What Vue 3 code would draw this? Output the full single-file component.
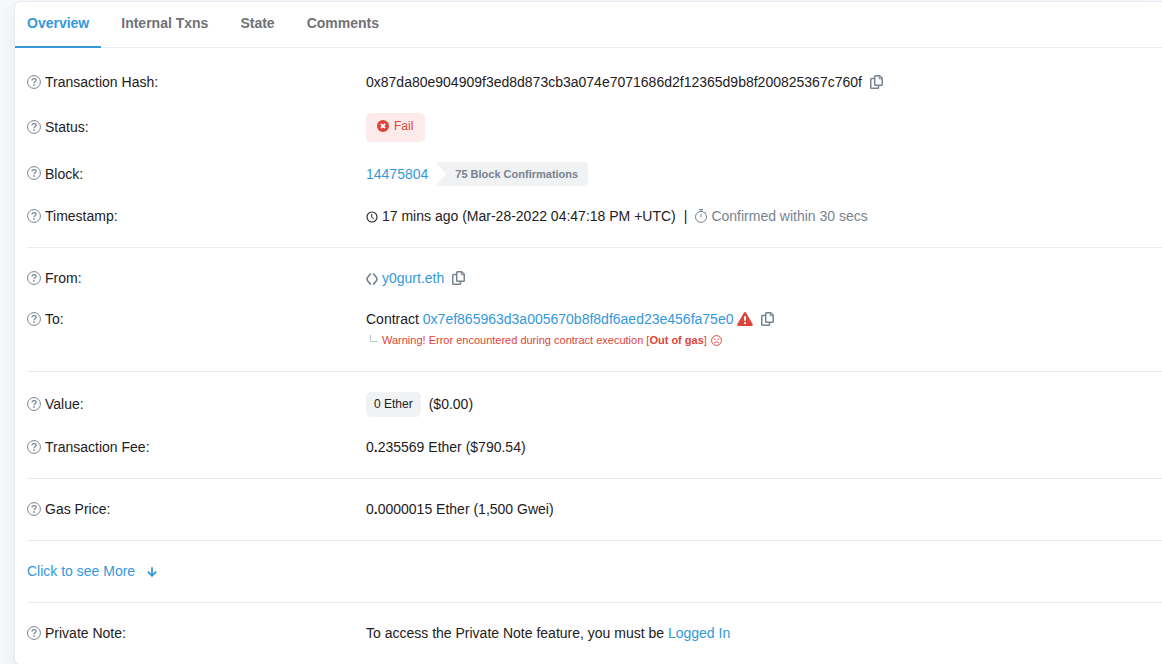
<script setup>
import { ref, h } from 'vue'

const tabs = ['Overview', 'Internal Txns', 'State', 'Comments']
const active = ref('Overview')

const HelpIcon = () =>
  h('svg', { width: 14, height: 14, viewBox: '0 0 14 14', fill: 'none', stroke: '#77838f', 'aria-hidden': 'true' }, [
    h('circle', { cx: 7, cy: 7, r: 6.4 }),
    h('path', { d: 'M5 5.5C5 4.2 5.9 3.6 7 3.6s2.1 .7 2.1 1.7c0 1.5-2.1 1.5-2.1 2.9', 'stroke-width': 1.2 }),
    h('path', { d: 'M7 9.3v1.5', 'stroke-width': 1.5 })
  ])

const CopyIcon = () =>
  h('svg', { width: 13, height: 14, viewBox: '0 0 13 14', fill: 'none', stroke: '#77838f', 'stroke-width': 1.5, 'stroke-linejoin': 'round', 'aria-hidden': 'true' }, [
    h('path', { d: 'M5.5 .75h4.2l2.55 2.55v6.2a.8 .8 0 0 1-.8 .8H5.5a.8 .8 0 0 1-.8-.8V1.55a.8 .8 0 0 1 .8-.8z' }),
    h('path', { d: 'M9.2 1v2.8H12', 'stroke-width': 1 }),
    h('path', { d: 'M4.7 3.5H1.55a.8 .8 0 0 0-.8 .8v8.15a.8 .8 0 0 0 .8 .8H7.7a.8 .8 0 0 0 .8-.8V10.5' })
  ])
</script>

<template>
  <main class="page">
    <div class="card">
      <nav class="tabs">
        <button
          v-for="t in tabs"
          :key="t"
          type="button"
          class="tab"
          :class="{ active: t === active }"
          @click="active = t"
        >{{ t }}</button>
      </nav>

      <div class="body">
        <section class="group">
          <div class="row">
            <div class="label"><HelpIcon />Transaction Hash:</div>
            <div class="value">
              <span>0x87da80e904909f3ed8d873cb3a074e7071686d2f12365d9b8f200825367c760f</span>
              <button type="button" class="copy" aria-label="Copy transaction hash"><CopyIcon /></button>
            </div>
          </div>
          <div class="row">
            <div class="label"><HelpIcon />Status:</div>
            <div class="value">
              <span class="fail">
                <svg width="12" height="12" viewBox="0 0 12 12" aria-hidden="true">
                  <circle cx="6" cy="6" r="6" fill="#de4437" />
                  <path d="M3.9 3.9l4.2 4.2M8.1 3.9L3.9 8.1" stroke="#fff" stroke-width="1.9" />
                </svg>
                Fail
              </span>
            </div>
          </div>
          <div class="row">
            <div class="label"><HelpIcon />Block:</div>
            <div class="value">
              <a href="#">14475804</a>
              <span class="confirmations">75 Block Confirmations</span>
            </div>
          </div>
          <div class="row">
            <div class="label"><HelpIcon />Timestamp:</div>
            <div class="value">
              <svg width="12" height="12" viewBox="0 0 12 12" fill="none" stroke="#1e2022" aria-hidden="true">
                <circle cx="6" cy="6" r="5" stroke-width="1.1" />
                <path d="M5.7 3v3.3l2 1.4" />
              </svg>
              <span>17 mins ago (Mar-28-2022 04:47:18 PM +UTC)</span>
              <span class="bar">|</span>
              <span class="muted">
                <svg width="14" height="14" viewBox="0 0 14 14" fill="none" stroke="#77838f" aria-hidden="true">
                  <circle cx="7" cy="7.9" r="5.5" />
                  <path d="M5 .6h4M7 .6v1.8M7 5v3.4M11 3.6l1-1" />
                </svg>
                Confirmed within 30 secs
              </span>
            </div>
          </div>
        </section>

        <section class="group">
          <div class="row">
            <div class="label"><HelpIcon />From:</div>
            <div class="value">
              <svg width="12" height="12" viewBox="0 0 12 12" fill="none" stroke="#77838f" stroke-width="1.7" aria-hidden="true">
                <path d="M4.8 .5C3.6 2.3 1 4 1 6.1s2.4 3.7 3.8 5.4" />
                <path d="M7.2 .5C8.4 2.3 11 4 11 6.1s-2.4 3.7-3.8 5.4" />
              </svg>
              <a href="#">y0gurt.eth</a>
              <button type="button" class="copy" aria-label="Copy sender address"><CopyIcon /></button>
            </div>
          </div>
          <div class="row top">
            <div class="label"><HelpIcon />To:</div>
            <div>
              <div class="value">
                <span>Contract <a href="#">0x7ef865963d3a005670b8f8df6aed23e456fa75e0</a></span>
                <svg class="alert" width="16" height="14" viewBox="0 0 16 14" aria-hidden="true">
                  <path d="M7 .6a1.15 1.15 0 0 1 2 0l6.7 11.6a1.15 1.15 0 0 1-1 1.7H1.3a1.15 1.15 0 0 1-1-1.7z" fill="#de4437" />
                  <path d="M8 4.2v4.6M8 10v2" stroke="#fff" stroke-width="1.9" />
                </svg>
                <button type="button" class="copy" aria-label="Copy contract address"><CopyIcon /></button>
              </div>
              <div class="warning">
                <span class="elbow"></span>
                <span>Warning! Error encountered during contract execution [<b>Out of gas</b>]</span>
                <svg width="11" height="11" viewBox="0 0 11 11" fill="none" stroke="#de4437" aria-hidden="true">
                  <circle cx="5.5" cy="5.5" r="4.9" />
                  <path d="M3.1 8c1-1.6 3.8-1.6 4.8 0" />
                  <path d="M3.2 4.2h1.3M6.5 4.2h1.3" stroke-width="1.3" />
                </svg>
              </div>
            </div>
          </div>
        </section>

        <section class="group">
          <div class="row">
            <div class="label"><HelpIcon />Value:</div>
            <div class="value">
              <span class="amount">0 Ether</span>
              <span>($0.00)</span>
            </div>
          </div>
          <div class="row">
            <div class="label"><HelpIcon />Transaction Fee:</div>
            <div class="value"><span>0<b>.</b>235569 Ether ($790.54)</span></div>
          </div>
        </section>

        <section class="group">
          <div class="row">
            <div class="label"><HelpIcon />Gas Price:</div>
            <div class="value"><span>0<b>.</b>0000015 Ether (1,500 Gwei)</span></div>
          </div>
        </section>

        <section class="group">
          <div class="row">
            <a href="#" class="more">
              Click to see More
              <svg width="10" height="10" viewBox="0 0 10 10" fill="none" stroke="#3498db" stroke-width="1.8" aria-hidden="true">
                <path d="M5 .3v8.2M.8 4.6L5 8.8l4.2-4.2" />
              </svg>
            </a>
          </div>
        </section>

        <section class="group">
          <div class="row">
            <div class="label"><HelpIcon />Private Note:</div>
            <div class="value"><span>To access the Private Note feature, you must be <a href="#">Logged In</a></span></div>
          </div>
        </section>
      </div>
    </div>
  </main>
</template>

<style>
body {
  margin: 0;
  background: #f8f9fa;
}
</style>

<style scoped>
.page {
  padding: 1px 0 0 14px;
  overflow: hidden;
  font-family: "Liberation Sans", Arial, sans-serif;
  font-size: 14px;
  line-height: 21px;
  color: #1e2022;
}
.card {
  background: #fff;
  border: 1px solid #e7eaf3;
  border-right: 0;
  border-radius: 6px 0 0 6px;
  box-shadow: 0 8px 20px rgba(189, 197, 209, 0.3);
}
.tabs {
  display: flex;
  gap: 8px;
  border-bottom: 1px solid #e7eaf3;
}
.tab {
  margin: 0 0 -1px;
  padding: 11px 12px 12px;
  border: 0;
  border-bottom: 2px solid transparent;
  background: none;
  font: bold 14px/21px "Liberation Sans", Arial, sans-serif;
  color: #6f7276;
  cursor: pointer;
}
.tab.active {
  color: #3498db;
  border-bottom-color: #3498db;
}
.body {
  padding: 4px 0 0 12px;
}
.group {
  padding: 10px 0;
  border-bottom: 1px solid #e7eaf3;
}
.group:last-child {
  border-bottom: 0;
}
.row {
  display: grid;
  grid-template-columns: 339px 1fr;
  align-items: center;
  padding: 10px 0;
}
.row.top {
  align-items: start;
}
.label,
.value,
.muted {
  display: flex;
  align-items: center;
  gap: 4px;
  white-space: nowrap;
}
.muted {
  gap: 3px;
  color: #77838f;
}
svg {
  flex: none;
}
.label svg,
.copy svg,
.muted svg,
.alert {
  margin-bottom: 2px;
}
a {
  color: #3498db;
  text-decoration: none;
}
.copy {
  display: flex;
  margin-left: 4px;
  padding: 0;
  border: 0;
  background: none;
  cursor: pointer;
}
.fail {
  display: flex;
  align-items: center;
  gap: 5px;
  padding: 4px 12px 7px 11px;
  border-radius: 5px;
  background: #fcebea;
  color: #de4437;
  font-size: 12px;
  line-height: 18px;
}
.confirmations {
  margin-left: 3px;
  padding: 0 10px 0 20px;
  border-radius: 4px;
  background: #f0f2f4;
  color: #77838f;
  font-size: 11px;
  font-weight: bold;
  line-height: 24px;
  clip-path: polygon(0 0, 100% 0, 100% 100%, 0 100%, 11px 50%);
}
.bar {
  margin: 0 3px 0 4px;
}
.warning {
  display: flex;
  align-items: center;
  gap: 4px;
  padding-left: 4px;
  color: #de4437;
  font-size: 11px;
  line-height: 21px;
  white-space: nowrap;
}
.elbow {
  width: 7px;
  height: 6px;
  margin-bottom: 4px;
  border-left: 1px solid #bdc5d1;
  border-bottom: 1px solid #bdc5d1;
}
.amount {
  margin-right: 4px;
  padding: 0 8px;
  border-radius: 5px;
  background: #f0f2f4;
  font-size: 12px;
  line-height: 25px;
}
.more {
  display: flex;
  align-items: center;
  gap: 12px;
}
</style>
